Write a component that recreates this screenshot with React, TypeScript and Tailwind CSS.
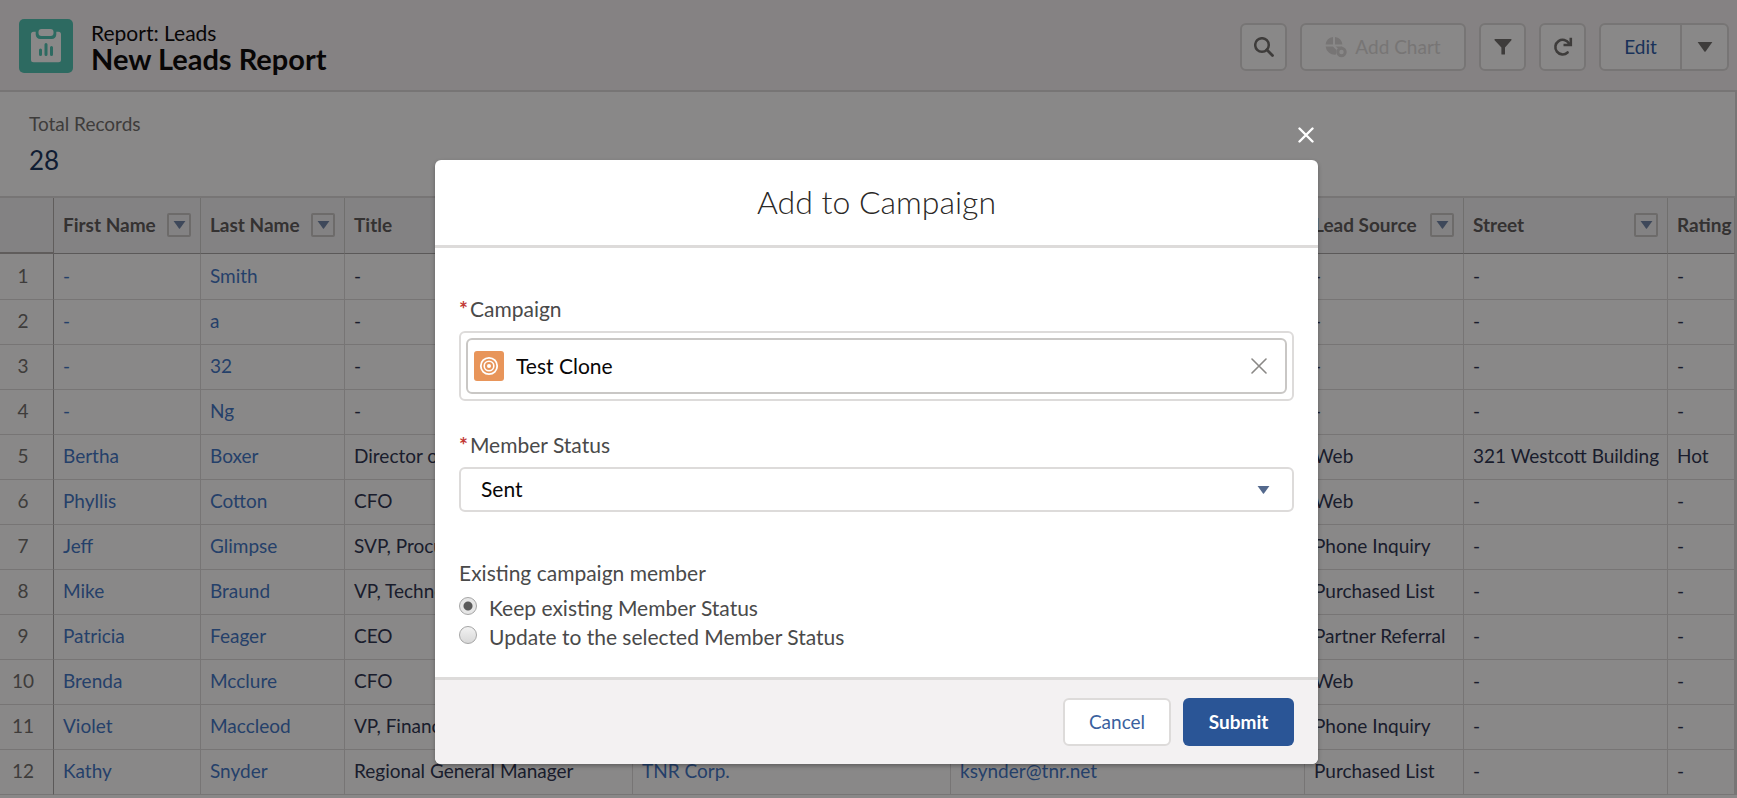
import type { ReactNode } from "react";
import { clsx } from "clsx";

const columns = [
  { label: "First Name", menu: true, width: "w-[147px]" },
  { label: "Last Name", menu: true, width: "w-[144px]" },
  { label: "Title", menu: false, width: "w-[288px]" },
  { label: "", menu: false, width: "w-[318px]" },
  { label: "", menu: false, width: "w-[354px]" },
  { label: "Lead Source", menu: true, width: "w-[159px]" },
  { label: "Street", menu: true, width: "w-[204px]" },
  { label: "Rating", menu: false, width: "w-auto" },
];

const leads = [
  ["-", "Smith", "-", "", "", "-", "-", "-"],
  ["-", "a", "-", "", "", "-", "-", "-"],
  ["-", "32", "-", "", "", "-", "-", "-"],
  ["-", "Ng", "-", "", "", "-", "-", "-"],
  ["Bertha", "Boxer", "Director of", "", "", "Web", "321 Westcott Building", "Hot"],
  ["Phyllis", "Cotton", "CFO", "", "", "Web", "-", "-"],
  ["Jeff", "Glimpse", "SVP, Procurement", "", "", "Phone Inquiry", "-", "-"],
  ["Mike", "Braund", "VP, Technology", "", "", "Purchased List", "-", "-"],
  ["Patricia", "Feager", "CEO", "", "", "Partner Referral", "-", "-"],
  ["Brenda", "Mcclure", "CFO", "", "", "Web", "-", "-"],
  ["Violet", "Maccleod", "VP, Finance", "", "", "Phone Inquiry", "-", "-"],
  ["Kathy", "Snyder", "Regional General Manager", "TNR Corp.", "ksynder@tnr.net", "Purchased List", "-", "-"],
];

const linkColumns = [0, 1, 3, 4];

function Caret({ className }: { className: string }) {
  return (
    <svg viewBox="0 0 16 10" className={className} fill="currentColor" aria-hidden="true">
      <path d="M0.6 0h14.8L8.6 9.4q-.6.8-1.2 0z" />
    </svg>
  );
}

function ReportIcon() {
  return (
    <svg viewBox="0 0 54 54" className="size-[54px] shrink-0" aria-hidden="true">
      <rect width="54" height="54" rx="5" fill="#4fc6b4" />
      <path
        d="M14.500 12.700h2.200V15.500a4.500 4.500 0 0 0 4.500 4.500h11.600a4.500 4.500 0 0 0 4.500-4.500V12.700h2.200a2.500 2.500 0 0 1 2.500 2.500v25.600a2.500 2.500 0 0 1-2.500 2.500H14.500a2.500 2.500 0 0 1-2.500-2.500V15.200a2.500 2.500 0 0 1 2.500-2.500z"
        fill="#fff"
      />
      <rect x="19.500" y="10" width="15" height="7" rx="3" fill="#fff" />
      <path d="M21.500 31v4.500M27 25.500v10M32.500 28.500v7" stroke="#4fc6b4" strokeWidth="3" strokeLinecap="round" />
    </svg>
  );
}

function IconButton({ label, children }: { label: string; children: ReactNode }) {
  return (
    <button
      type="button"
      aria-label={label}
      className="flex h-12 w-[47px] items-center justify-center rounded-md border-2 border-[#dddbda] bg-white text-[#706e6b]"
    >
      {children}
    </button>
  );
}

function PageHeader() {
  return (
    <header className="flex h-[92px] items-center justify-between border-b-2 border-[#dddbda] bg-[#f8f4f5] pr-2 pl-[19px]">
      <div className="flex items-center gap-[18px] pt-0.5">
        <ReportIcon />
        <div className="pt-0.5">
          <p className="text-[21px] leading-6 text-[#080707]">Report: Leads</p>
          <h1 className="text-[29px] leading-7 font-bold text-[#080707]">New Leads Report</h1>
        </div>
      </div>

      <div className="flex items-center gap-[13px] pt-1">
        <IconButton label="Search">
          <svg viewBox="0 0 20 20" className="size-5" fill="none" stroke="currentColor" strokeWidth="2.500">
            <circle cx="8" cy="8" r="6.800" />
            <path d="M12.800 12.800l5.700 5.700" strokeLinecap="round" strokeWidth="2.800" />
          </svg>
        </IconButton>
        <button
          type="button"
          disabled
          className="flex h-12 w-[166px] items-center justify-center gap-2 rounded-md border-2 border-[#dddbda] bg-white text-[19px] text-[#dddbda]"
        >
          <svg viewBox="0 0 22 22" className="size-[22px]" fill="currentColor" aria-hidden="true">
            <path d="M8 1v7.500H.600A8.800 8.800 0 0 1 8 1zM10 1a8.800 8.800 0 0 1 7.400 7.500H10zM.600 10.500H8l3.500 3.500-.5 4.600A9 9 0 0 1 .600 10.500zM10.500 10.500h6.900v.500l-4.400 1.500z" />
            <circle cx="16.500" cy="16" r="3.700" fill="none" stroke="currentColor" strokeWidth="3" />
          </svg>
          Add Chart
        </button>
        <IconButton label="Filter">
          <svg viewBox="0 0 18 18" className="size-[18px]" fill="currentColor">
            <path d="M1 1h16q1 .200.400 1.200L11 9.500v6.500q0 .600-.600.600H8q-.600 0-.600-.600V9.500L.600 2.200Q0 1.200 1 1z" />
          </svg>
        </IconButton>
        <IconButton label="Refresh">
          <svg viewBox="0 0 20 20" className="size-5" fill="none" stroke="currentColor" strokeWidth="2.600" strokeLinecap="round">
            <path d="M14.600 15.500A7.300 7.300 0 1 1 16 6.500" />
            <path d="M17.800 2v6h-6" strokeLinecap="square" />
          </svg>
        </IconButton>
        <div className="flex">
          <button
            type="button"
            className="h-12 w-[83px] rounded-l-md border-2 border-[#dddbda] bg-white text-[19px] text-[#2a5aa6]"
          >
            Edit
          </button>
          <button
            type="button"
            aria-label="More actions"
            className="flex h-12 w-[47px] items-center justify-center rounded-r-md border-2 border-l-0 border-[#dddbda] bg-white text-[#706e6b]"
          >
            <Caret className="h-[10px] w-4" />
          </button>
        </div>
      </div>
    </header>
  );
}

function ReportTable() {
  return (
    <table className="w-full table-fixed border-separate border-spacing-0 border-r-2 border-[#dddbda] text-left text-[19px] leading-6 whitespace-nowrap">
      <thead>
        <tr className="h-14 bg-[#f4f4f6] text-[#5c5a5a]">
          <th className="w-[54px] border-r border-b-2 border-[#b0adab]" />
          {columns.map((col, i) => (
            <th
              key={i}
              className={clsx("overflow-hidden border-r border-b border-r-[#d0cfce] border-b-[#a8a6a5] px-[9px] pb-0.5", col.width)}
            >
              <span className="flex items-center justify-between">
                {col.label}
                {col.menu && (
                  <button
                    type="button"
                    aria-label={`${col.label} column menu`}
                    className="flex size-6 items-center justify-center rounded-xs border-2 border-[#c9c7c5] text-[#6f85a8]"
                  >
                    <Caret className="h-2 w-[13px]" />
                  </button>
                )}
              </span>
            </th>
          ))}
        </tr>
      </thead>
      <tbody>
        {leads.map((lead, row) => (
          <tr key={row} className="h-[45px] bg-white first:h-[46px]">
            <td className="border-r border-b border-r-[#a8a6a5] border-b-[#dddbda] pr-[7px] pb-0.5 text-center text-[#706e6b]">
              {row + 1}
            </td>
            {lead.map((value, i) => (
              <td key={i} className="overflow-hidden border-r border-b border-[#dddbda] px-[9px] pb-0.5 text-[#2b3350]">
                {linkColumns.includes(i) && value ? (
                  <a href="#" className="text-[#3f76c6]">
                    {value}
                  </a>
                ) : (
                  value
                )}
              </td>
            ))}
          </tr>
        ))}
      </tbody>
    </table>
  );
}

function RequiredLabel({ htmlFor, children }: { htmlFor: string; children: ReactNode }) {
  return (
    <label htmlFor={htmlFor} className="flex gap-0.5 text-[21px] leading-6 text-[#4a4a4a]">
      <span className="font-bold text-[#c23934]">*</span>
      {children}
    </label>
  );
}

function Radio({ label, defaultChecked }: { label: string; defaultChecked?: boolean }) {
  return (
    <label className="flex h-[29px] gap-3 text-[21px] leading-[26px]">
      <input
        type="radio"
        name="existing"
        defaultChecked={defaultChecked}
        className="mt-0.5 size-[18px] appearance-none rounded-full border border-[#a5a5a5] bg-linear-to-b from-[#f2f2f2] to-[#d8d8d8] checked:bg-[radial-gradient(circle,#5a5a5a_4px,#e6e6e6_5px)]"
      />
      {label}
    </label>
  );
}

function CampaignModal() {
  return (
    <div className="absolute inset-0 flex flex-col items-center bg-[#080707]/48 pt-[125px] pl-4">
      <div className="flex w-[883px] max-w-full justify-end pr-1">
        <button type="button" aria-label="Close" className="flex h-[35px] items-start text-white">
          <svg viewBox="0 0 16 16" className="mt-0.5 size-4" stroke="currentColor" strokeWidth="2.400" strokeLinecap="round">
            <path d="M1.500 1.500l13 13M14.500 1.500l-13 13" />
          </svg>
        </button>
      </div>

      <section
        role="dialog"
        aria-labelledby="modal-title"
        className="w-[883px] max-w-full overflow-hidden rounded-md bg-white shadow-[0_2px_4px_rgba(0,0,0,0.3)]"
      >
        <h2
          id="modal-title"
          className="flex h-[88px] items-center justify-center border-b-3 border-[#dddbda] pb-0.5 text-[32px] leading-10 font-light text-[#2b2826]"
        >
          Add to Campaign
        </h2>

        <div className="px-6 pt-[49px] pb-6 text-[#4a4a4a]">
          <RequiredLabel htmlFor="campaign">Campaign</RequiredLabel>
          <div className="mt-[10px] rounded-md border-2 border-[#dddbda] p-[5px]">
            <div className="flex h-[56px] items-center gap-3 rounded-md border-2 border-[#c9c7c5] pr-[18px] pl-[6px]">
              <svg viewBox="0 0 30 30" className="size-[30px] shrink-0" fill="none" stroke="#fff" aria-hidden="true">
                <rect width="30" height="30" rx="3" fill="#e8955a" stroke="none" />
                <circle cx="15" cy="15" r="8.200" strokeWidth="1.800" />
                <circle cx="15" cy="15" r="4.800" strokeWidth="1.600" />
                <circle cx="15" cy="15" r="2" fill="#fff" stroke="none" />
              </svg>
              <input id="campaign" defaultValue="Test Clone" className="min-w-0 flex-1 text-[21px] text-[#080707] outline-none" />
              <button type="button" aria-label="Clear campaign" className="text-[#8a8886]">
                <svg viewBox="0 0 16 16" className="size-4" stroke="currentColor" strokeWidth="1.600" strokeLinecap="round">
                  <path d="M1 1l14 14M15 1L1 15" />
                </svg>
              </button>
            </div>
          </div>

          <div className="mt-8">
            <RequiredLabel htmlFor="status">Member Status</RequiredLabel>
            <div className="mt-[10px] grid items-center">
              <select
                id="status"
                className="col-start-1 row-start-1 h-[45px] w-full appearance-none rounded-md border-2 border-[#dddbda] bg-white px-5 pb-0.5 text-[21px] text-[#080707]"
              >
                <option>Sent</option>
                <option>Responded</option>
              </select>
              <Caret className="pointer-events-none col-start-1 row-start-1 mr-6 h-2 w-[13px] justify-self-end text-[#54698d]" />
            </div>
          </div>

          <fieldset className="mt-[49px]">
            <legend className="mb-[10px] text-[21px] leading-6">Existing campaign member</legend>
            <Radio label="Keep existing Member Status" defaultChecked />
            <Radio label="Update to the selected Member Status" />
          </fieldset>
        </div>

        <footer className="flex justify-end gap-3 border-t-3 border-[#dddbda] bg-[#f3f1f2] px-6 pt-[18px] pb-[18px]">
          <button type="button" className="h-12 w-[108px] rounded-md border-2 border-[#dddbda] bg-white text-[19px] text-[#3a5f9e]">
            Cancel
          </button>
          <button type="button" className="h-12 w-[111px] rounded-md bg-[#2a5596] text-[19px] font-bold text-white">
            Submit
          </button>
        </footer>
      </section>
    </div>
  );
}

export default function App() {
  return (
    <div className="relative h-screen overflow-hidden bg-white font-[Lato,'Open_Sans',sans-serif]">
      <PageHeader />
      <section className="h-[106px] border-r-2 border-b-2 border-[#dddbda] bg-white pt-5 pl-[29px]">
        <p className="text-[19px] leading-6 text-[#706e6b]">Total Records</p>
        <p className="mt-2 text-[26px] leading-8 text-[#16325c]">28</p>
      </section>
      <ReportTable />
      <CampaignModal />
    </div>
  );
}
